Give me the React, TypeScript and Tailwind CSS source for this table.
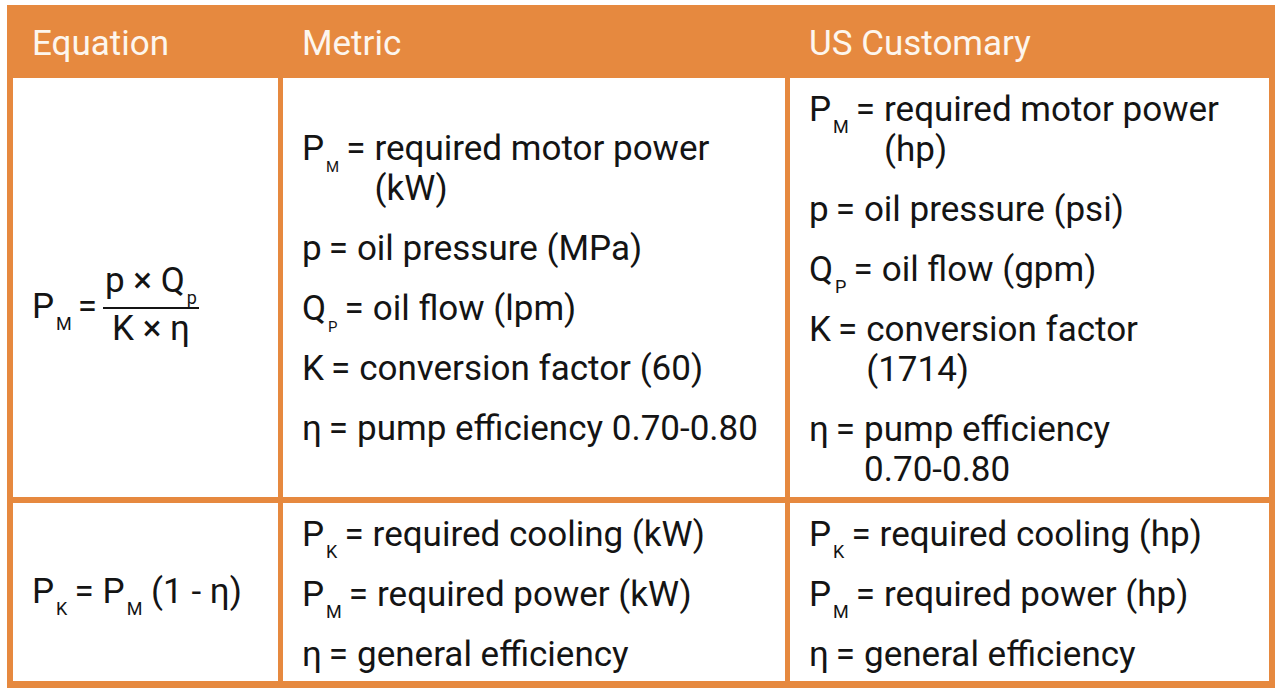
import type { ReactNode } from "react";

const ORANGE = "bg-[#e6893f]";

function Sub({ children, small }: { children: ReactNode; small?: boolean }) {
  return (
    <span
      className={`relative top-[12px] ml-[2px] leading-[0] ${small ? "text-[15px]" : "text-[18px]"}`}
    >
      {children}
    </span>
  );
}

interface DefProps {
  sym: string;
  sub?: string;
  small?: boolean;
  children: ReactNode;
}

function Def({ sym, sub, small, children }: DefProps) {
  return (
    <div className="flex leading-[40px]">
      <span className="whitespace-nowrap">
        {sym}
        {sub && <Sub small={small}>{sub}</Sub>}
        <span className="ml-[7px] mr-[9px]">=</span>
      </span>
      <span className="whitespace-nowrap">{children}</span>
    </div>
  );
}

export default function App() {
  return (
    <div
      className="min-h-[700px] bg-white pl-[7px] pt-[5px] text-[#141414]"
      style={{ fontFamily: "Roboto, 'Liberation Sans', sans-serif" }}
    >
      <div className={`w-[1268px] ${ORANGE} px-[6px] pb-[7px]`}>
        {/* Header */}
        <div className="grid h-[73px] grid-cols-[265px_502px_479px] items-center gap-x-[5px] pt-[5px] text-[35px] text-[#fdf6ee]">
          <div className="pl-[19px]">Equation</div>
          <div className="pl-[19px]">Metric</div>
          <div className="pl-[19px]">US Customary</div>
        </div>

        {/* Body */}
        <div className="grid grid-cols-[265px_502px_479px] grid-rows-[419px_178px] gap-x-[5px] gap-y-[6px] text-[35px]">
          {/* Row 1 */}
          <div className="flex items-center bg-white pl-[19px] pt-[40px]">
            <div className="flex items-center">
              <span className="whitespace-nowrap">
                P<Sub>M</Sub>
                <span className="ml-[6px] mr-[6px]">=</span>
              </span>
              <div className="flex flex-col items-center">
                <span className="mb-[4px] whitespace-nowrap px-[2px] leading-[44px]">
                  p × Q<Sub>p</Sub>
                </span>
                <span className="h-[2px] w-full bg-[#141414]" />
                <span className="mb-[8px] whitespace-nowrap leading-[40px]">K × η</span>
              </div>
            </div>
          </div>

          <div className="flex flex-col justify-center gap-[20px] bg-white pl-[19px] pt-[2px]">
            <Def sym="P" sub="M" small>
              required motor power
              <br />
              (kW)
            </Def>
            <Def sym="p">oil pressure (MPa)</Def>
            <Def sym="Q" sub="P" small>
              oil flow (lpm)
            </Def>
            <Def sym="K">conversion factor (60)</Def>
            <Def sym="η">pump efficiency 0.70-0.80</Def>
          </div>

          <div className="flex flex-col justify-center gap-[20px] bg-white pl-[19px] pt-[5px]">
            <Def sym="P" sub="M">
              required motor power
              <br />
              (hp)
            </Def>
            <Def sym="p">oil pressure (psi)</Def>
            <Def sym="Q" sub="P">
              oil flow (gpm)
            </Def>
            <Def sym="K">
              conversion factor
              <br />
              (1714)
            </Def>
            <Def sym="η">
              pump efficiency
              <br />
              0.70-0.80
            </Def>
          </div>

          {/* Row 2 */}
          <div className="flex items-center bg-white pl-[19px]">
            <span className="whitespace-nowrap">
              P<Sub>K</Sub>
              <span className="ml-[7px] mr-[9px]">=</span>P<Sub>M</Sub> (1 - η)
            </span>
          </div>

          <div className="flex flex-col justify-center gap-[20px] bg-white pl-[19px] pt-[6px]">
            <Def sym="P" sub="K">
              required cooling (kW)
            </Def>
            <Def sym="P" sub="M">
              required power (kW)
            </Def>
            <Def sym="η">general efficiency</Def>
          </div>

          <div className="flex flex-col justify-center gap-[20px] bg-white pl-[19px] pt-[6px]">
            <Def sym="P" sub="K">
              required cooling (hp)
            </Def>
            <Def sym="P" sub="M">
              required power (hp)
            </Def>
            <Def sym="η">general efficiency</Def>
          </div>
        </div>
      </div>
    </div>
  );
}
